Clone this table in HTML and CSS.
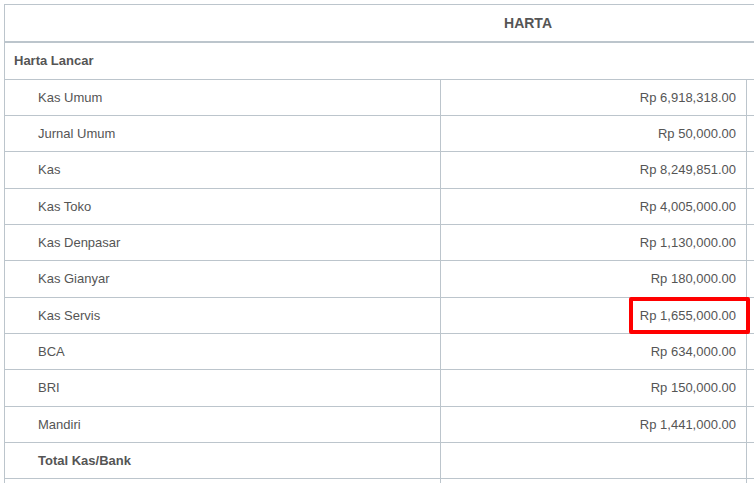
FILE: index.html
```html
<!DOCTYPE html>
<html lang="id">

<head>
    <meta charset="utf-8">
    <meta name="viewport" content="width=device-width, initial-scale=1.0">
    <title>Neraca</title>
    <link rel="stylesheet" href="styles.css">
</head>

<body>
    <div class="wadah">
        <table class="neraca">
            <colgroup>
                <col class="kol-nama">
                <col class="kol-nilai">
                <col class="kol-lain">
            </colgroup>
            <thead>
                <tr>
                    <th colspan="3">HARTA</th>
                </tr>
            </thead>
            <tbody>
                <tr class="grup">
                    <td colspan="3">Harta Lancar</td>
                </tr>
                <tr>
                    <td class="akun">Kas Umum</td>
                    <td class="nilai">Rp 6,918,318.00</td>
                    <td></td>
                </tr>
                <tr>
                    <td class="akun">Jurnal Umum</td>
                    <td class="nilai">Rp 50,000.00</td>
                    <td></td>
                </tr>
                <tr>
                    <td class="akun">Kas</td>
                    <td class="nilai">Rp 8,249,851.00</td>
                    <td></td>
                </tr>
                <tr>
                    <td class="akun">Kas Toko</td>
                    <td class="nilai">Rp 4,005,000.00</td>
                    <td></td>
                </tr>
                <tr>
                    <td class="akun">Kas Denpasar</td>
                    <td class="nilai">Rp 1,130,000.00</td>
                    <td></td>
                </tr>
                <tr>
                    <td class="akun">Kas Gianyar</td>
                    <td class="nilai">Rp 180,000.00</td>
                    <td></td>
                </tr>
                <tr>
                    <td class="akun">Kas Servis</td>
                    <td class="nilai ditandai">Rp 1,655,000.00<span class="sorot"></span></td>
                    <td></td>
                </tr>
                <tr>
                    <td class="akun">BCA</td>
                    <td class="nilai">Rp 634,000.00</td>
                    <td></td>
                </tr>
                <tr>
                    <td class="akun">BRI</td>
                    <td class="nilai">Rp 150,000.00</td>
                    <td></td>
                </tr>
                <tr>
                    <td class="akun">Mandiri</td>
                    <td class="nilai">Rp 1,441,000.00</td>
                    <td></td>
                </tr>
                <tr class="total">
                    <td>Total Kas/Bank</td>
                    <td></td>
                    <td></td>
                </tr>
                <tr>
                    <td class="akun">&nbsp;</td>
                    <td></td>
                    <td></td>
                </tr>
            </tbody>
        </table>
    </div>
</body>

</html>
```

FILE: styles.css
```css
/*GENERELT*/
* {
    margin: 0;
    padding: 0;
    box-sizing: border-box;
}

body {
    margin: 0;
    background: #fff;
    font-family: 'Liberation Sans', Arial, sans-serif;
    font-size: 13px;
    color: #555;
    overflow: hidden;
}

.wadah {
    padding: 4px 0 0 4px;
    width: 754px;
    height: 483px;
    overflow: hidden;
}

/*TABEL NERACA*/
.neraca {
    border-collapse: collapse;
    table-layout: fixed;
    width: 1047px;
}

.kol-nama {
    width: 436px;
}

.kol-nilai {
    width: 306px;
}

.kol-lain {
    width: 305px;
}

.neraca th,
.neraca td {
    border: 1px solid #bcc5cc;
    padding: 8px 9px;
    line-height: 19.33px;
    text-align: left;
    white-space: nowrap;
}

.neraca th {
    text-align: center;
    font-weight: bold;
    font-size: 14px;
    padding: 9px 9px 8px;
    border-bottom: 2px solid #bcc5cc;
}

.grup td,
.total td {
    font-weight: bold;
}

.neraca .akun {
    padding-left: 33px;
}

.total td:first-child {
    padding-left: 33px;
}

.neraca .nilai {
    text-align: right;
    padding-right: 10px;
}

/*KOTAK MERAH*/
.ditandai {
    position: relative;
}

.sorot {
    position: absolute;
    top: -1px;
    bottom: -1px;
    right: -4px;
    width: 121px;
    border: 4px solid #f00;
    border-radius: 2px;
}
```
